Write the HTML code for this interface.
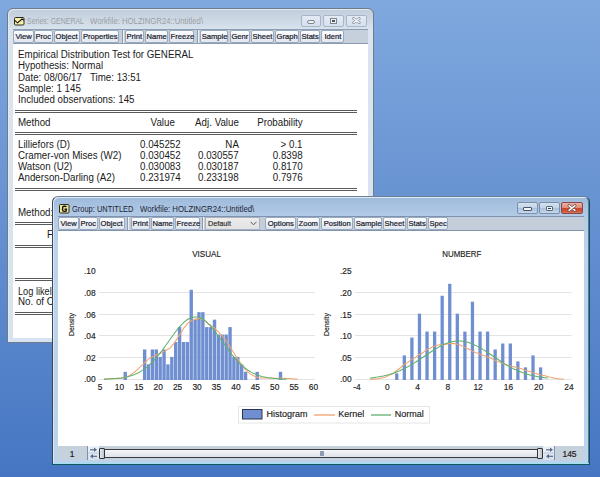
<!DOCTYPE html>
<html><head><meta charset="utf-8"><style>
*{margin:0;padding:0;box-sizing:border-box;}
html,body{width:600px;height:477px;overflow:hidden;}
body{position:relative;font-family:"Liberation Sans", sans-serif;background:linear-gradient(to bottom,#7fa8de 0%,#6893d2 42%,#4676c3 100%);}
.abs{position:absolute;}
.win{position:absolute;border-radius:6px 6px 0 0;}
.tb{position:absolute;border:1px solid #9aa9bd;border-radius:2px;background:linear-gradient(to bottom,#fbfcfd 0%,#eef2f7 50%,#dfe6ef 100%);font-size:8px;color:#1c1c2c;text-align:center;white-space:nowrap;}
.tb span{position:absolute;left:0;right:0;top:0.7px;line-height:9px;-webkit-text-stroke:0.22px #1c1c2c;}
.t{position:absolute;white-space:nowrap;line-height:10px;}
.rule{position:absolute;height:3px;border-top:1px solid #5a5a5a;border-bottom:1px solid #5a5a5a;}
.cap{position:absolute;border:1px solid #8e9aab;border-radius:2px;}
</style></head><body>


<div class="win" style="left:7px;top:8px;width:367px;height:335px;border:1px solid #6f7b8a;background:linear-gradient(to bottom,#c1cddb 0%,#ccd7e4 3%,#dae4ef 6.3%,#d7e3f0 100%);box-shadow:inset 1px 1px 0 #e2e9f1;"></div>

<svg class="abs" style="left:13px;top:16px" width="12" height="10" viewBox="0 0 12 10"><rect x="1.5" y="1.5" width="9.5" height="7.5" rx="1" fill="#f8f0a8" stroke="#2a2a20" stroke-width="1"/><path d="M1.6 4.3 L4.6 6.8 L9 3 L10.8 4.3" fill="none" stroke="#111" stroke-width="1.1"/></svg>
<div class="t" style="left:27px;top:16px;font-size:8.3px;color:#9a9ea4;"><span style="display:inline-block;transform:scaleX(0.84);transform-origin:0 0">Series: GENERAL</span></div>
<div class="t" style="left:90px;top:16px;font-size:8.3px;color:#9a9ea4;"><span style="display:inline-block;transform:scaleX(0.93);transform-origin:0 0">Workfile: HOLZINGR24::Untitled\</span></div>
<div class="cap" style="left:301px;top:15px;width:20px;height:12px;background:linear-gradient(to bottom,#e3ebf5,#d5e0ee);border-color:#a9b5c5;"></div>
<div class="cap" style="left:323px;top:15px;width:21px;height:12px;background:linear-gradient(to bottom,#e3ebf5,#d5e0ee);border-color:#a9b5c5;"></div>
<div class="cap" style="left:346px;top:15px;width:21px;height:12px;background:linear-gradient(to bottom,#e3ebf5,#d5e0ee);border-color:#a9b5c5;"></div>
<div class="abs" style="left:307px;top:20px;width:8px;height:4px;border:1px solid #7d8590;border-radius:2px;background:#f0f0f0"></div>
<div class="abs" style="left:330px;top:18px;width:7px;height:6px;border:1px solid #7d8590;background:#f0f0f0"><div style="margin:1px;width:3px;height:2px;background:#555"></div></div>
<svg class="abs" style="left:350px;top:16px" width="13" height="9" viewBox="0 0 13 9"><path d="M3.6 2.6 L9.2 6.6 M9.2 2.6 L3.6 6.6" stroke="#8a8f98" stroke-width="2.8" stroke-linecap="round"/><path d="M3.6 2.6 L9.2 6.6 M9.2 2.6 L3.6 6.6" stroke="#f4f6f8" stroke-width="1.3" stroke-linecap="round"/></svg>
<div class="abs" style="left:13px;top:29px;width:355px;height:15px;background:#c6d0dd;border-top:1px solid #8a9bb2;border-bottom:1px solid #8a9bb2;"></div>
<div class="tb" style="left:13px;top:30px;width:21px;height:13px;"><span><i style="display:inline-block;font-style:normal;transform:scaleX(0.95)">View</i></span></div>
<div class="tb" style="left:34px;top:30px;width:19px;height:13px;"><span><i style="display:inline-block;font-style:normal;transform:scaleX(0.95)">Proc</i></span></div>
<div class="tb" style="left:54px;top:30px;width:26px;height:13px;"><span><i style="display:inline-block;font-style:normal;transform:scaleX(0.95)">Object</i></span></div>
<div class="tb" style="left:81px;top:30px;width:38px;height:13px;"><span><i style="display:inline-block;font-style:normal;transform:scaleX(0.95)">Properties</i></span></div>
<div class="tb" style="left:125px;top:30px;width:19px;height:13px;"><span><i style="display:inline-block;font-style:normal;transform:scaleX(0.95)">Print</i></span></div>
<div class="tb" style="left:145px;top:30px;width:23px;height:13px;"><span><i style="display:inline-block;font-style:normal;transform:scaleX(0.95)">Name</i></span></div>
<div class="tb" style="left:169px;top:30px;width:25px;height:13px;"><span><i style="display:inline-block;font-style:normal;transform:scaleX(0.95)">Freeze</i></span></div>
<div class="tb" style="left:200px;top:30px;width:28px;height:13px;"><span><i style="display:inline-block;font-style:normal;transform:scaleX(0.95)">Sample</i></span></div>
<div class="tb" style="left:230px;top:30px;width:20px;height:13px;"><span><i style="display:inline-block;font-style:normal;transform:scaleX(0.95)">Genr</i></span></div>
<div class="tb" style="left:251px;top:30px;width:23px;height:13px;"><span><i style="display:inline-block;font-style:normal;transform:scaleX(0.95)">Sheet</i></span></div>
<div class="tb" style="left:275px;top:30px;width:24px;height:13px;"><span><i style="display:inline-block;font-style:normal;transform:scaleX(0.95)">Graph</i></span></div>
<div class="tb" style="left:300px;top:30px;width:20px;height:13px;"><span><i style="display:inline-block;font-style:normal;transform:scaleX(0.95)">Stats</i></span></div>
<div class="tb" style="left:321px;top:30px;width:23px;height:13px;"><span><i style="display:inline-block;font-style:normal;transform:scaleX(0.95)">Ident</i></span></div>
<div class="abs" style="left:122px;top:30px;width:2px;height:13px;border-left:1px solid #8d9bb0;border-right:1px solid #eef2f7;"></div>
<div class="abs" style="left:197px;top:30px;width:2px;height:13px;border-left:1px solid #8d9bb0;border-right:1px solid #eef2f7;"></div>
<div class="abs" style="left:13px;top:44px;width:355px;height:294px;background:#fff;"></div>
<div class="t" style="left:18px;top:50.33px;font-size:10.0px;line-height:10.0px;color:#1a1a1a;"><span style="display:inline-block;transform:scaleX(0.975);transform-origin:0 0">Empirical Distribution Test for GENERAL</span></div>
<div class="t" style="left:18px;top:61.44px;font-size:10.0px;line-height:10.0px;color:#1a1a1a;"><span style="display:inline-block;transform:scaleX(0.975);transform-origin:0 0">Hypothesis: Normal</span></div>
<div class="t" style="left:18px;top:72.83px;font-size:10.0px;line-height:10.0px;color:#1a1a1a;"><span style="display:inline-block;transform:scaleX(0.975);transform-origin:0 0">Date: 08/06/17&nbsp;&nbsp; Time: 13:51</span></div>
<div class="t" style="left:18px;top:83.73px;font-size:10.0px;line-height:10.0px;color:#1a1a1a;"><span style="display:inline-block;transform:scaleX(0.975);transform-origin:0 0">Sample: 1 145</span></div>
<div class="t" style="left:18px;top:94.94px;font-size:10.0px;line-height:10.0px;color:#1a1a1a;"><span style="display:inline-block;transform:scaleX(0.975);transform-origin:0 0">Included observations: 145</span></div>
<div class="rule" style="left:15px;top:110px;width:342px;"></div>
<div class="rule" style="left:15px;top:132px;width:342px;"></div>
<div class="rule" style="left:15px;top:188px;width:342px;"></div>
<div class="rule" style="left:15px;top:222px;width:342px;"></div>
<div class="rule" style="left:15px;top:245px;width:342px;"></div>
<div class="rule" style="left:15px;top:278px;width:342px;"></div>
<div class="rule" style="left:15px;top:312px;width:342px;"></div>
<div class="t" style="left:18px;top:117.83px;font-size:10.0px;line-height:10.0px;color:#1a1a1a;"><span style="display:inline-block;transform:scaleX(0.975);transform-origin:0 0">Method</span></div>
<div class="t" style="left:-125px;width:300px;text-align:right;top:117.83px;font-size:10.0px;line-height:10.0px;color:#1a1a1a;"><span style="display:inline-block;transform:scaleX(0.975);transform-origin:100% 0">Value</span></div>
<div class="t" style="left:-61.30000000000001px;width:300px;text-align:right;top:117.83px;font-size:10.0px;line-height:10.0px;color:#1a1a1a;"><span style="display:inline-block;transform:scaleX(0.975);transform-origin:100% 0">Adj. Value</span></div>
<div class="t" style="left:3px;width:300px;text-align:right;top:117.83px;font-size:10.0px;line-height:10.0px;color:#1a1a1a;"><span style="display:inline-block;transform:scaleX(0.975);transform-origin:100% 0">Probability</span></div>
<div class="t" style="left:18px;top:140.44px;font-size:10.0px;line-height:10.0px;color:#1a1a1a;"><span style="display:inline-block;transform:scaleX(0.975);transform-origin:0 0">Lilliefors (D)</span></div>
<div class="t" style="left:-119.69999999999999px;width:300px;text-align:right;top:140.44px;font-size:10.0px;line-height:10.0px;color:#1a1a1a;"><span style="display:inline-block;transform:scaleX(0.975);transform-origin:100% 0">0.045252</span></div>
<div class="t" style="left:-61.30000000000001px;width:300px;text-align:right;top:140.44px;font-size:10.0px;line-height:10.0px;color:#1a1a1a;"><span style="display:inline-block;transform:scaleX(0.975);transform-origin:100% 0">NA</span></div>
<div class="t" style="left:3px;width:300px;text-align:right;top:140.44px;font-size:10.0px;line-height:10.0px;color:#1a1a1a;"><span style="display:inline-block;transform:scaleX(0.975);transform-origin:100% 0">&gt; 0.1</span></div>
<div class="t" style="left:18px;top:151.44px;font-size:10.0px;line-height:10.0px;color:#1a1a1a;"><span style="display:inline-block;transform:scaleX(0.975);transform-origin:0 0">Cramer-von Mises (W2)</span></div>
<div class="t" style="left:-119.69999999999999px;width:300px;text-align:right;top:151.44px;font-size:10.0px;line-height:10.0px;color:#1a1a1a;"><span style="display:inline-block;transform:scaleX(0.975);transform-origin:100% 0">0.030452</span></div>
<div class="t" style="left:-61.30000000000001px;width:300px;text-align:right;top:151.44px;font-size:10.0px;line-height:10.0px;color:#1a1a1a;"><span style="display:inline-block;transform:scaleX(0.975);transform-origin:100% 0">0.030557</span></div>
<div class="t" style="left:3px;width:300px;text-align:right;top:151.44px;font-size:10.0px;line-height:10.0px;color:#1a1a1a;"><span style="display:inline-block;transform:scaleX(0.975);transform-origin:100% 0">0.8398</span></div>
<div class="t" style="left:18px;top:162.44px;font-size:10.0px;line-height:10.0px;color:#1a1a1a;"><span style="display:inline-block;transform:scaleX(0.975);transform-origin:0 0">Watson (U2)</span></div>
<div class="t" style="left:-119.69999999999999px;width:300px;text-align:right;top:162.44px;font-size:10.0px;line-height:10.0px;color:#1a1a1a;"><span style="display:inline-block;transform:scaleX(0.975);transform-origin:100% 0">0.030083</span></div>
<div class="t" style="left:-61.30000000000001px;width:300px;text-align:right;top:162.44px;font-size:10.0px;line-height:10.0px;color:#1a1a1a;"><span style="display:inline-block;transform:scaleX(0.975);transform-origin:100% 0">0.030187</span></div>
<div class="t" style="left:3px;width:300px;text-align:right;top:162.44px;font-size:10.0px;line-height:10.0px;color:#1a1a1a;"><span style="display:inline-block;transform:scaleX(0.975);transform-origin:100% 0">0.8170</span></div>
<div class="t" style="left:18px;top:173.44px;font-size:10.0px;line-height:10.0px;color:#1a1a1a;"><span style="display:inline-block;transform:scaleX(0.975);transform-origin:0 0">Anderson-Darling (A2)</span></div>
<div class="t" style="left:-119.69999999999999px;width:300px;text-align:right;top:173.44px;font-size:10.0px;line-height:10.0px;color:#1a1a1a;"><span style="display:inline-block;transform:scaleX(0.975);transform-origin:100% 0">0.231974</span></div>
<div class="t" style="left:-61.30000000000001px;width:300px;text-align:right;top:173.44px;font-size:10.0px;line-height:10.0px;color:#1a1a1a;"><span style="display:inline-block;transform:scaleX(0.975);transform-origin:100% 0">0.233198</span></div>
<div class="t" style="left:3px;width:300px;text-align:right;top:173.44px;font-size:10.0px;line-height:10.0px;color:#1a1a1a;"><span style="display:inline-block;transform:scaleX(0.975);transform-origin:100% 0">0.7976</span></div>
<div class="t" style="left:18px;top:207.84px;font-size:10.0px;line-height:10.0px;color:#1a1a1a;"><span style="display:inline-block;transform:scaleX(0.975);transform-origin:0 0">Method:</span></div>
<div class="t" style="left:47.4px;top:229.84px;font-size:10.0px;line-height:10.0px;color:#1a1a1a;"><span style="display:inline-block;transform:scaleX(0.975);transform-origin:0 0">F</span></div>
<div class="t" style="left:18px;top:286.74px;font-size:10.0px;line-height:10.0px;color:#1a1a1a;"><span style="display:inline-block;transform:scaleX(0.92);transform-origin:0 0">Log likel</span></div>
<div class="t" style="left:18px;top:297.34px;font-size:10.0px;line-height:10.0px;color:#1a1a1a;"><span style="display:inline-block;transform:scaleX(0.975);transform-origin:0 0">No. of C</span></div>

<div class="win" style="left:52px;top:196px;width:538px;height:269px;border:1px solid #3b4654;border-top-color:#6f8196;border-right-color:#2c4262;border-bottom-color:#0e5a5e;background:linear-gradient(to bottom,#9fbadc 0%,#b4cce6 8%,#bcd3ec 20%,#bcd3ec 100%);box-shadow:inset 1px 1px 0 #dbe8f5,inset -1px 0 0 #3a8a9a;"></div>

<svg class="abs" style="left:58px;top:203px" width="12" height="11" viewBox="0 0 12 11"><rect x="1.5" y="1.5" width="9.5" height="8.5" rx="1" fill="#f3e692" stroke="#2a2a20" stroke-width="1"/><path d="M8.4 3.9 Q8 3.3 6.6 3.3 H6 Q4.6 3.3 4.6 4.9 V6.7 Q4.6 8.4 6.1 8.4 H6.8 Q8.4 8.4 8.4 6.9 V6.2 H6.5" fill="none" stroke="#111" stroke-width="1.4"/></svg>
<div class="t" style="left:72px;top:203.5px;font-size:8.3px;color:#1d2533;"><span style="display:inline-block;transform:scaleX(0.9);transform-origin:0 0">Group: UNTITLED</span></div>
<div class="t" style="left:140px;top:203.5px;font-size:8.3px;color:#1d2533;"><span style="display:inline-block;transform:scaleX(0.94);transform-origin:0 0">Workfile: HOLZINGR24::Untitled\</span></div>
<div class="cap" style="left:517px;top:202px;width:21px;height:12px;background:linear-gradient(to bottom,#d5e3f2 0%,#c2d5ea 45%,#a9c2df 55%,#c4d8ee 100%);border-color:#7d8fa5;"></div>
<div class="cap" style="left:539px;top:202px;width:21px;height:12px;background:linear-gradient(to bottom,#d5e3f2 0%,#c2d5ea 45%,#a9c2df 55%,#c4d8ee 100%);border-color:#7d8fa5;"></div>
<div class="cap" style="left:561px;top:202px;width:22px;height:12px;background:linear-gradient(to bottom,#eeb0a2 0%,#e38f7c 45%,#c8462c 52%,#cc5338 80%,#d9755c 100%);border-color:#8a4a44;"></div>
<div class="abs" style="left:523px;top:207px;width:9px;height:4px;border:1px solid #4a5566;border-radius:1px;background:#f4f4f4"></div>
<div class="abs" style="left:545.5px;top:205.5px;width:7.5px;height:5px;border:1px solid #5d6878;border-radius:1px;background:#eef0f2"><div style="margin:1px 1px;width:3.5px;height:1.5px;background:#3a4250"></div></div>
<svg class="abs" style="left:565px;top:202px" width="14" height="11" viewBox="0 0 14 11"><path d="M4 3.6 L10 8.4 M10 3.6 L4 8.4" stroke="#6a4a48" stroke-width="2.9" stroke-linecap="round"/><path d="M4 3.6 L10 8.4 M10 3.6 L4 8.4" stroke="#ffffff" stroke-width="1.4" stroke-linecap="round"/></svg>
<div class="abs" style="left:58px;top:216px;width:526px;height:15px;background:#c4cedb;border-top:1px solid #7d93b0;border-bottom:1px solid #8094ae;"></div>
<div class="tb" style="left:58px;top:217px;width:21px;height:13px;"><span><i style="display:inline-block;font-style:normal;transform:scaleX(0.95)">View</i></span></div>
<div class="tb" style="left:79px;top:217px;width:19px;height:13px;"><span><i style="display:inline-block;font-style:normal;transform:scaleX(0.95)">Proc</i></span></div>
<div class="tb" style="left:99px;top:217px;width:26px;height:13px;"><span><i style="display:inline-block;font-style:normal;transform:scaleX(0.95)">Object</i></span></div>
<div class="tb" style="left:131px;top:217px;width:19px;height:13px;"><span><i style="display:inline-block;font-style:normal;transform:scaleX(0.95)">Print</i></span></div>
<div class="tb" style="left:151px;top:217px;width:23px;height:13px;"><span><i style="display:inline-block;font-style:normal;transform:scaleX(0.95)">Name</i></span></div>
<div class="tb" style="left:175px;top:217px;width:25px;height:13px;"><span><i style="display:inline-block;font-style:normal;transform:scaleX(0.95)">Freeze</i></span></div>
<div class="tb" style="left:265px;top:217px;width:31px;height:13px;"><span><i style="display:inline-block;font-style:normal;transform:scaleX(0.95)">Options</i></span></div>
<div class="tb" style="left:297px;top:217px;width:23px;height:13px;"><span><i style="display:inline-block;font-style:normal;transform:scaleX(0.95)">Zoom</i></span></div>
<div class="tb" style="left:321px;top:217px;width:32px;height:13px;"><span><i style="display:inline-block;font-style:normal;transform:scaleX(0.95)">Position</i></span></div>
<div class="tb" style="left:354px;top:217px;width:28px;height:13px;"><span><i style="display:inline-block;font-style:normal;transform:scaleX(0.95)">Sample</i></span></div>
<div class="tb" style="left:383px;top:217px;width:23px;height:13px;"><span><i style="display:inline-block;font-style:normal;transform:scaleX(0.95)">Sheet</i></span></div>
<div class="tb" style="left:407px;top:217px;width:20px;height:13px;"><span><i style="display:inline-block;font-style:normal;transform:scaleX(0.95)">Stats</i></span></div>
<div class="tb" style="left:428px;top:217px;width:20px;height:13px;"><span><i style="display:inline-block;font-style:normal;transform:scaleX(0.95)">Spec</i></span></div>
<div class="abs" style="left:127px;top:217px;width:2px;height:13px;border-left:1px solid #8d9bb0;border-right:1px solid #eef2f7;"></div>
<div class="abs" style="left:202px;top:217px;width:2px;height:13px;border-left:1px solid #8d9bb0;border-right:1px solid #eef2f7;"></div>
<div class="abs" style="left:205px;top:217px;width:55px;height:13px;border:1px solid #aab2bd;background:linear-gradient(to bottom,#ececec,#e2e2e2);"></div>
<div class="t" style="left:208px;top:218.5px;font-size:7.8px;color:#111;-webkit-text-stroke:0.1px #111"><span style="display:inline-block;transform:scaleX(0.93);transform-origin:0 0">Default</span></div>
<svg class="abs" style="left:250px;top:221px" width="7" height="5" viewBox="0 0 7 5"><path d="M0.5 0.8 L3.5 3.8 L6.5 0.8" fill="none" stroke="#555" stroke-width="1"/></svg>
<div class="abs" style="left:58px;top:231px;width:526px;height:215px;background:#fff;"></div>
<svg class="abs" style="left:0;top:0" width="600" height="477" viewBox="0 0 600 477" font-family="Liberation Sans"><style>text{stroke:#222;stroke-width:0.15px;}</style>
<line x1="99" y1="379.5" x2="315" y2="379.5" stroke="#e3e3e3" stroke-width="1"/>
<line x1="99" y1="357.5" x2="315" y2="357.5" stroke="#e3e3e3" stroke-width="1"/>
<line x1="99" y1="335.5" x2="315" y2="335.5" stroke="#e3e3e3" stroke-width="1"/>
<line x1="99" y1="314.5" x2="315" y2="314.5" stroke="#e3e3e3" stroke-width="1"/>
<line x1="99" y1="292.5" x2="315" y2="292.5" stroke="#e3e3e3" stroke-width="1"/>
<text x="95.7" y="382.4" font-size="8.4" text-anchor="end" fill="#222">.00</text>
<text x="95.7" y="360.8" font-size="8.4" text-anchor="end" fill="#222">.02</text>
<text x="95.7" y="339.1" font-size="8.4" text-anchor="end" fill="#222">.04</text>
<text x="95.7" y="317.5" font-size="8.4" text-anchor="end" fill="#222">.06</text>
<text x="95.7" y="295.9" font-size="8.4" text-anchor="end" fill="#222">.08</text>
<text x="95.7" y="274.3" font-size="8.4" text-anchor="end" fill="#222">.10</text>
<text x="100.0" y="390.4" font-size="8.4" text-anchor="middle" fill="#222">5</text>
<text x="119.4" y="390.4" font-size="8.4" text-anchor="middle" fill="#222">10</text>
<text x="138.8" y="390.4" font-size="8.4" text-anchor="middle" fill="#222">15</text>
<text x="158.2" y="390.4" font-size="8.4" text-anchor="middle" fill="#222">20</text>
<text x="177.6" y="390.4" font-size="8.4" text-anchor="middle" fill="#222">25</text>
<text x="197.1" y="390.4" font-size="8.4" text-anchor="middle" fill="#222">30</text>
<text x="216.5" y="390.4" font-size="8.4" text-anchor="middle" fill="#222">35</text>
<text x="235.9" y="390.4" font-size="8.4" text-anchor="middle" fill="#222">40</text>
<text x="255.3" y="390.4" font-size="8.4" text-anchor="middle" fill="#222">45</text>
<text x="274.7" y="390.4" font-size="8.4" text-anchor="middle" fill="#222">50</text>
<text x="294.1" y="390.4" font-size="8.4" text-anchor="middle" fill="#222">55</text>
<text x="313.5" y="390.4" font-size="8.4" text-anchor="middle" fill="#222">60</text>
<text x="206.6" y="257.1" font-size="8.7" text-anchor="middle" fill="#1a1a1a" textLength="28.8" lengthAdjust="spacingAndGlyphs">VISUAL</text>
<text transform="translate(73.6,324.5) rotate(-90)" font-size="6.9" text-anchor="middle" fill="#222">Density</text>
<g fill="#6f8fd1"><rect x="123.54" y="371.84" width="3.38" height="8.16"/>
<rect x="142.95" y="349.47" width="3.38" height="30.53"/>
<rect x="146.83" y="364.38" width="3.38" height="15.62"/>
<rect x="150.72" y="349.47" width="3.38" height="30.53"/>
<rect x="154.60" y="349.47" width="3.38" height="30.53"/>
<rect x="158.48" y="356.92" width="3.38" height="23.08"/>
<rect x="162.36" y="349.47" width="3.38" height="30.53"/>
<rect x="166.24" y="364.38" width="3.38" height="15.62"/>
<rect x="170.13" y="356.92" width="3.38" height="23.08"/>
<rect x="174.01" y="342.01" width="3.38" height="37.99"/>
<rect x="177.89" y="327.09" width="3.38" height="52.91"/>
<rect x="181.77" y="342.01" width="3.38" height="37.99"/>
<rect x="185.65" y="342.01" width="3.38" height="37.99"/>
<rect x="189.54" y="289.80" width="3.38" height="90.20"/>
<rect x="193.42" y="319.63" width="3.38" height="60.37"/>
<rect x="197.30" y="312.17" width="3.38" height="67.83"/>
<rect x="201.18" y="312.17" width="3.38" height="67.83"/>
<rect x="205.06" y="327.09" width="3.38" height="52.91"/>
<rect x="208.95" y="327.09" width="3.38" height="52.91"/>
<rect x="212.83" y="319.63" width="3.38" height="60.37"/>
<rect x="216.71" y="334.55" width="3.38" height="45.45"/>
<rect x="220.59" y="334.55" width="3.38" height="45.45"/>
<rect x="224.47" y="334.55" width="3.38" height="45.45"/>
<rect x="228.36" y="327.09" width="3.38" height="52.91"/>
<rect x="232.24" y="356.92" width="3.38" height="23.08"/>
<rect x="236.12" y="356.92" width="3.38" height="23.08"/>
<rect x="240.00" y="364.38" width="3.38" height="15.62"/>
<rect x="243.88" y="371.84" width="3.38" height="8.16"/>
<rect x="255.53" y="371.84" width="3.38" height="8.16"/>
<rect x="278.82" y="371.84" width="3.38" height="8.16"/></g>
<polyline points="104.1,379.3 105.7,379.1 107.3,378.9 109.0,378.8 110.6,378.7 112.2,378.5 113.9,378.4 115.5,378.4 117.1,378.3 118.7,378.2 120.4,378.2 122.0,378.2 123.6,378.1 125.2,377.4 126.9,376.8 128.5,375.9 130.1,375.1 131.8,374.2 133.4,372.9 135.0,371.8 136.6,370.1 138.3,368.7 139.9,367.2 141.5,365.7 143.2,364.3 144.8,362.5 146.4,361.0 148.0,359.6 149.7,358.4 151.3,357.4 152.9,356.5 154.5,356.0 156.2,355.0 157.8,354.5 159.4,353.7 161.1,353.0 162.7,352.3 164.3,351.1 165.9,350.5 167.6,349.4 169.2,348.8 170.8,347.3 172.4,345.1 174.1,343.4 175.7,340.6 177.3,338.6 179.0,335.8 180.6,333.4 182.2,331.0 183.8,328.1 185.5,326.2 187.1,323.9 188.7,322.5 190.4,321.2 192.0,320.2 193.6,319.9 195.2,318.9 196.9,319.1 198.5,318.3 200.1,318.5 201.7,318.9 203.4,319.5 205.0,321.1 206.6,322.0 208.3,324.2 209.9,324.8 211.5,325.8 213.1,327.1 214.8,328.2 216.4,330.3 218.0,331.3 219.6,333.3 221.3,334.9 222.9,336.6 224.5,338.8 226.2,340.7 227.8,343.4 229.4,345.6 231.0,348.4 232.7,351.0 234.3,353.5 235.9,356.4 237.6,358.6 239.2,361.2 240.8,363.4 242.4,365.8 244.1,368.0 245.7,369.8 247.3,371.9 248.9,372.9 250.6,374.1 252.2,375.0 253.8,375.9 255.5,376.7 257.1,377.2 258.7,377.7 260.3,377.9 262.0,377.9 263.6,377.9 265.2,377.9 266.8,377.9 268.5,377.9 270.1,377.9 271.7,378.0 273.4,378.1 275.0,378.2 276.6,378.2 278.2,378.2 279.9,378.2 281.5,378.2 283.1,378.2 284.8,378.3 286.4,378.4 288.0,378.4 289.6,378.5 291.3,378.7 292.9,378.8 294.5,378.9 296.1,379.1 297.8,379.3" fill="none" stroke="#f0a470" stroke-width="1.05"/>
<polyline points="104.1,379.1 105.6,379.1 107.2,379.0 108.7,379.0 110.2,378.9 111.7,378.8 113.3,378.7 114.8,378.6 116.3,378.5 117.9,378.3 119.4,378.2 120.9,378.0 122.5,377.7 124.0,377.5 125.5,377.2 127.1,376.9 128.6,376.5 130.1,376.1 131.7,375.6 133.2,375.1 134.7,374.5 136.3,373.8 137.8,373.1 139.3,372.3 140.8,371.4 142.4,370.4 143.9,369.4 145.4,368.3 147.0,367.1 148.5,365.8 150.0,364.4 151.6,362.9 153.1,361.3 154.6,359.6 156.2,357.9 157.7,356.1 159.2,354.2 160.8,352.2 162.3,350.2 163.8,348.1 165.3,346.0 166.9,343.8 168.4,341.7 169.9,339.5 171.5,337.4 173.0,335.3 174.5,333.2 176.1,331.2 177.6,329.2 179.1,327.4 180.7,325.6 182.2,324.0 183.7,322.5 185.3,321.2 186.8,320.0 188.3,319.0 189.9,318.2 191.4,317.6 192.9,317.2 194.4,316.9 196.0,316.9 197.5,317.1 199.0,317.5 200.6,318.0 202.1,318.8 203.6,319.8 205.2,320.9 206.7,322.2 208.2,323.6 209.8,325.2 211.3,326.9 212.8,328.7 214.4,330.6 215.9,332.6 217.4,334.7 219.0,336.8 220.5,339.0 222.0,341.1 223.5,343.3 225.1,345.4 226.6,347.5 228.1,349.6 229.7,351.7 231.2,353.6 232.7,355.6 234.3,357.4 235.8,359.2 237.3,360.9 238.9,362.5 240.4,364.0 241.9,365.4 243.5,366.7 245.0,368.0 246.5,369.1 248.0,370.2 249.6,371.2 251.1,372.1 252.6,372.9 254.2,373.6 255.7,374.3 257.2,374.9 258.8,375.5 260.3,375.9 261.8,376.4 263.4,376.8 264.9,377.1 266.4,377.4 268.0,377.7 269.5,377.9 271.0,378.1 272.6,378.3 274.1,378.4 275.6,378.6 277.1,378.7 278.7,378.8 280.2,378.9 281.7,378.9 283.3,379.0 284.8,379.1 286.3,379.1" fill="none" stroke="#5fb06e" stroke-width="1.05"/>
<line x1="355" y1="379.5" x2="571.5" y2="379.5" stroke="#e3e3e3" stroke-width="1"/>
<line x1="355" y1="357.5" x2="571.5" y2="357.5" stroke="#e3e3e3" stroke-width="1"/>
<line x1="355" y1="335.5" x2="571.5" y2="335.5" stroke="#e3e3e3" stroke-width="1"/>
<line x1="355" y1="314.5" x2="571.5" y2="314.5" stroke="#e3e3e3" stroke-width="1"/>
<line x1="355" y1="292.5" x2="571.5" y2="292.5" stroke="#e3e3e3" stroke-width="1"/>
<text x="351.7" y="382.4" font-size="8.4" text-anchor="end" fill="#222">.00</text>
<text x="351.7" y="360.8" font-size="8.4" text-anchor="end" fill="#222">.05</text>
<text x="351.7" y="339.1" font-size="8.4" text-anchor="end" fill="#222">.10</text>
<text x="351.7" y="317.5" font-size="8.4" text-anchor="end" fill="#222">.15</text>
<text x="351.7" y="295.9" font-size="8.4" text-anchor="end" fill="#222">.20</text>
<text x="351.7" y="274.3" font-size="8.4" text-anchor="end" fill="#222">.25</text>
<text x="357.0" y="390.4" font-size="8.4" text-anchor="middle" fill="#222">-4</text>
<text x="387.3" y="390.4" font-size="8.4" text-anchor="middle" fill="#222">0</text>
<text x="417.6" y="390.4" font-size="8.4" text-anchor="middle" fill="#222">4</text>
<text x="447.9" y="390.4" font-size="8.4" text-anchor="middle" fill="#222">8</text>
<text x="478.1" y="390.4" font-size="8.4" text-anchor="middle" fill="#222">12</text>
<text x="508.4" y="390.4" font-size="8.4" text-anchor="middle" fill="#222">16</text>
<text x="538.7" y="390.4" font-size="8.4" text-anchor="middle" fill="#222">20</text>
<text x="569.0" y="390.4" font-size="8.4" text-anchor="middle" fill="#222">24</text>
<text x="461.8" y="257.1" font-size="8.5" text-anchor="middle" fill="#1a1a1a" textLength="39" lengthAdjust="spacingAndGlyphs">NUMBERF</text>
<text transform="translate(329.4,324.6) rotate(-90)" font-size="6.9" text-anchor="middle" fill="#222">Density</text>
<g fill="#6f8fd1"><rect x="395.12" y="373.33" width="3.29" height="6.67"/>
<rect x="402.69" y="355.43" width="3.29" height="24.57"/>
<rect x="410.26" y="337.53" width="3.29" height="42.47"/>
<rect x="417.83" y="313.66" width="3.28" height="66.34"/>
<rect x="425.40" y="331.56" width="3.28" height="48.44"/>
<rect x="432.97" y="331.56" width="3.28" height="48.44"/>
<rect x="440.54" y="295.76" width="3.29" height="84.24"/>
<rect x="448.11" y="283.83" width="3.28" height="96.17"/>
<rect x="455.68" y="313.66" width="3.29" height="66.34"/>
<rect x="463.25" y="331.56" width="3.29" height="48.44"/>
<rect x="470.82" y="301.73" width="3.28" height="78.27"/>
<rect x="478.39" y="331.56" width="3.29" height="48.44"/>
<rect x="485.96" y="331.56" width="3.28" height="48.44"/>
<rect x="493.53" y="349.47" width="3.28" height="30.53"/>
<rect x="501.10" y="343.50" width="3.28" height="36.50"/>
<rect x="508.67" y="343.50" width="3.29" height="36.50"/>
<rect x="516.24" y="361.40" width="3.28" height="18.60"/>
<rect x="523.81" y="367.37" width="3.29" height="12.63"/>
<rect x="531.38" y="355.43" width="3.28" height="24.57"/>
<rect x="538.95" y="367.37" width="3.28" height="12.63"/></g>
<polyline points="369.9,379.3 371.5,379.2 373.2,379.1 374.8,379.1 376.4,379.0 378.0,378.8 379.7,378.4 381.3,378.1 382.9,377.7 384.6,377.4 386.2,376.7 387.8,375.9 389.4,375.1 391.1,374.5 392.7,373.8 394.3,372.3 396.0,371.0 397.6,369.8 399.2,368.7 400.8,367.5 402.5,366.0 404.1,364.7 405.7,363.5 407.4,362.6 409.0,361.3 410.6,360.1 412.2,359.1 413.9,358.3 415.5,357.6 417.1,356.1 418.8,354.8 420.4,353.9 422.0,353.2 423.6,352.2 425.3,350.7 426.9,349.7 428.5,348.8 430.2,348.2 431.8,347.1 433.4,346.4 435.0,346.0 436.7,345.4 438.3,345.1 439.9,344.7 441.5,344.7 443.2,344.7 444.8,344.5 446.4,344.2 448.1,343.7 449.7,343.6 451.3,343.5 452.9,343.6 454.6,343.5 456.2,343.8 457.8,344.4 459.5,344.8 461.1,345.5 462.7,346.1 464.3,347.1 466.0,348.0 467.6,348.6 469.2,349.3 470.9,350.2 472.5,351.5 474.1,352.1 475.7,352.7 477.4,353.1 479.0,353.8 480.6,354.7 482.3,355.1 483.9,355.6 485.5,356.0 487.1,356.7 488.8,357.4 490.4,358.0 492.0,358.7 493.7,359.6 495.3,360.8 496.9,361.3 498.5,361.7 500.2,362.3 501.8,363.0 503.4,363.8 505.0,364.3 506.7,364.8 508.3,365.2 509.9,365.9 511.6,366.3 513.2,366.6 514.8,366.9 516.4,367.4 518.1,367.9 519.7,368.3 521.3,368.7 523.0,369.3 524.6,369.9 526.2,370.6 527.8,371.0 529.5,371.5 531.1,372.1 532.7,372.8 534.4,373.3 536.0,373.6 537.6,374.0 539.2,374.4 540.9,374.9 542.5,375.2 544.1,375.6 545.8,376.0 547.4,376.4 549.0,376.9 550.6,377.2 552.3,377.6 553.9,378.0 555.5,378.4 557.1,378.7 558.8,378.8 560.4,379.0 562.0,379.1 563.7,379.3" fill="none" stroke="#f0a470" stroke-width="1.05"/>
<polyline points="369.9,378.0 371.4,377.9 372.9,377.7 374.4,377.5 375.9,377.3 377.4,377.1 378.9,376.8 380.4,376.6 381.9,376.3 383.4,376.0 384.9,375.6 386.3,375.3 387.8,374.9 389.3,374.5 390.8,374.0 392.3,373.6 393.8,373.1 395.3,372.5 396.8,371.9 398.3,371.3 399.8,370.7 401.3,370.0 402.8,369.3 404.3,368.6 405.8,367.8 407.3,367.1 408.8,366.2 410.3,365.4 411.8,364.5 413.3,363.6 414.8,362.6 416.2,361.7 417.7,360.7 419.2,359.7 420.7,358.7 422.2,357.7 423.7,356.7 425.2,355.7 426.7,354.7 428.2,353.7 429.7,352.7 431.2,351.7 432.7,350.7 434.2,349.8 435.7,348.8 437.2,348.0 438.7,347.1 440.2,346.3 441.7,345.5 443.2,344.8 444.6,344.1 446.1,343.5 447.6,343.0 449.1,342.5 450.6,342.1 452.1,341.7 453.6,341.4 455.1,341.2 456.6,341.1 458.1,341.0 459.6,341.0 461.1,341.1 462.6,341.2 464.1,341.4 465.6,341.7 467.1,342.1 468.6,342.5 470.1,343.0 471.6,343.6 473.0,344.2 474.5,344.9 476.0,345.6 477.5,346.4 479.0,347.2 480.5,348.0 482.0,348.9 483.5,349.9 485.0,350.8 486.5,351.8 488.0,352.8 489.5,353.8 491.0,354.8 492.5,355.8 494.0,356.8 495.5,357.8 497.0,358.8 498.5,359.8 500.0,360.8 501.4,361.8 502.9,362.7 504.4,363.7 505.9,364.6 507.4,365.5 508.9,366.3 510.4,367.1 511.9,367.9 513.4,368.7 514.9,369.4 516.4,370.1 517.9,370.8 519.4,371.4 520.9,372.0 522.4,372.6 523.9,373.1 525.4,373.6 526.9,374.1 528.4,374.5 529.8,374.9 531.3,375.3 532.8,375.7 534.3,376.0 535.8,376.3 537.3,376.6 538.8,376.9 540.3,377.1 541.8,377.3 543.3,377.5 544.8,377.7 546.3,377.9 547.8,378.0" fill="none" stroke="#5fb06e" stroke-width="1.05"/>
<rect x="238.5" y="406.5" width="191" height="16.5" fill="#fff" stroke="#e6e6e6" stroke-width="1"/>
<rect x="242.5" y="409.5" width="19.5" height="9.5" fill="#6f8fd1" stroke="#2a3550" stroke-width="1"/>
<text x="266.5" y="417.3" font-size="9" fill="#1a1a1a">Histogram</text>
<line x1="314" y1="415" x2="335" y2="415" stroke="#f0a06a" stroke-width="1.3"/>
<text x="338.3" y="417.3" font-size="9" fill="#1a1a1a">Kernel</text>
<line x1="371" y1="415" x2="391" y2="415" stroke="#62ad70" stroke-width="1.3"/>
<text x="394.8" y="417.3" font-size="9" fill="#1a1a1a">Normal</text>
</svg>
<div class="abs" style="left:58px;top:446px;width:526px;height:14px;background:#c6d1de;"></div>
<div class="t" style="left:62px;top:448.5px;width:20px;text-align:center;font-size:8.5px;color:#222;-webkit-text-stroke:0.2px #222">1</div>
<div class="t" style="left:558px;top:448.5px;width:23px;text-align:center;font-size:8.5px;color:#222;-webkit-text-stroke:0.2px #222">145</div>
<div class="abs" style="left:87px;top:446px;width:12px;height:14px;border-left:1px solid #8090a8;background:linear-gradient(to bottom,#eef3f8,#d6dfea)"></div>
<svg class="abs" style="left:88px;top:446px" width="11" height="14" viewBox="0 0 11 14"><path d="M2 3.8 H6.5" stroke="#566a8c" stroke-width="1.2"/><path d="M6 1.6 L9 3.8 L6 6 Z" fill="#566a8c"/><path d="M9 10.3 H4.5" stroke="#566a8c" stroke-width="1.2"/><path d="M5 8.1 L2 10.3 L5 12.5 Z" fill="#566a8c"/><line x1="0" y1="7" x2="11" y2="7" stroke="#b8c4d4" stroke-width="0.8"/></svg>
<div class="abs" style="left:542.5px;top:446px;width:12px;height:14px;border-right:1px solid #8090a8;background:linear-gradient(to bottom,#eef3f8,#d6dfea)"></div>
<svg class="abs" style="left:543.5px;top:446px" width="11" height="14" viewBox="0 0 11 14"><path d="M2 3.8 H6.5" stroke="#566a8c" stroke-width="1.2"/><path d="M6 1.6 L9 3.8 L6 6 Z" fill="#566a8c"/><path d="M9 10.3 H4.5" stroke="#566a8c" stroke-width="1.2"/><path d="M5 8.1 L2 10.3 L5 12.5 Z" fill="#566a8c"/><line x1="0" y1="7" x2="11" y2="7" stroke="#b8c4d4" stroke-width="0.8"/></svg>
<div class="abs" style="left:99px;top:448.5px;width:444px;height:9.5px;border:1px solid #3a3a3a;background:linear-gradient(to bottom,#f4f6f9,#dde3ea);"></div>
<div class="abs" style="left:99px;top:448px;width:6px;height:11px;border:1px solid #333;border-radius:1px;background:linear-gradient(to right,#e8ecf2,#b9c3d0)"></div>
<div class="abs" style="left:537px;top:448px;width:6px;height:11px;border:1px solid #333;border-radius:1px;background:linear-gradient(to right,#e8ecf2,#b9c3d0)"></div>
<div class="abs" style="left:320px;top:451px;width:3.5px;height:4.5px;background:#8c9bb2;border-radius:0.5px"></div>
<div class="abs" style="left:53px;top:463px;width:536px;height:1px;background:#9fe0f0"></div>
<div class="abs" style="left:53px;top:464px;width:536px;height:1px;background:#0e5a5e"></div>
</body></html>
